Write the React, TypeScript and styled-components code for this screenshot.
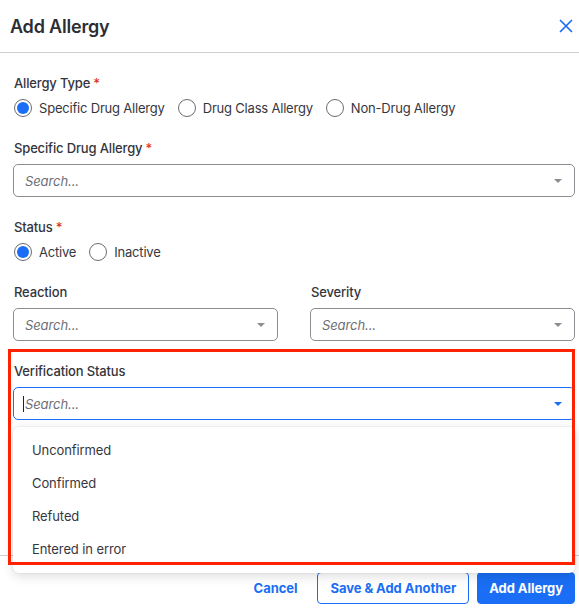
import React from 'react';
import styled, { createGlobalStyle } from 'styled-components';

const GlobalStyle = createGlobalStyle`
  html, body {
    margin: 0;
    padding: 0;
    background: #ffffff;
  }
  body {
    font-family: Inter, "Noto Sans", "Liberation Sans", sans-serif;
    color: #34353c;
    -webkit-font-smoothing: antialiased;
  }
`;

const Modal = styled.div`
  position: relative;
  width: 579px;
  height: 613px;
  background: #fff;
  overflow: hidden;
`;

const Header = styled.div`
  height: 52px;
  display: flex;
  align-items: center;
  justify-content: space-between;
  padding: 0 5px 0 10px;
  border-bottom: 1px solid #cfcfd3;
`;

const Title = styled.h2`
  margin: 0;
  font-size: 18px;
  font-weight: 600;
  color: #2c2d33;
  letter-spacing: -0.2px;
`;

const CloseButton = styled.button`
  border: 0;
  background: none;
  padding: 0;
  width: 16px;
  height: 16px;
  display: flex;
  align-items: center;
  justify-content: center;
  color: #1a6ef5;
  cursor: pointer;
`;

const Body = styled.div`
  padding: 20px 4px 0 13px;
  display: flex;
  flex-direction: column;
  gap: 20px;
`;

const Field = styled.div<{ $tight?: boolean }>`
  position: relative;
  display: flex;
  flex-direction: column;
  gap: ${p => (p.$tight ? '5px' : '6px')};
  min-width: 0;
`;

const Row = styled.div`
  display: grid;
  grid-template-columns: 1fr 1fr;
  gap: 32px;
`;

const Label = styled.div`
  font-size: 13px;
  line-height: 20px;
  font-weight: 450;
  color: #34353c;
  padding-left: 1px;
  letter-spacing: -0.15px;
`;

const Required = styled.span`
  color: #e0322c;
  margin-left: 3px;
`;

const RadioGroup = styled.div`
  display: flex;
  align-items: center;
  gap: 13px;
  height: 20px;
  padding-left: 1px;
`;

const RadioOption = styled.label`
  display: flex;
  align-items: center;
  gap: 7px;
  font-size: 13px;
  color: #36373e;
  letter-spacing: -0.2px;
`;

const RadioCircle = styled.span<{ $checked?: boolean }>`
  width: 18px;
  height: 18px;
  box-sizing: border-box;
  border-radius: 50%;
  border: 1px solid #6b6c72;
  display: flex;
  align-items: center;
  justify-content: center;
  background: #fff;

  &::after {
    content: '';
    width: 12px;
    height: 12px;
    border-radius: 50%;
    background: ${p => (p.$checked ? '#1a6ef5' : 'transparent')};
  }
`;

const SelectBox = styled.div<{ $focused?: boolean }>`
  height: 33px;
  box-sizing: border-box;
  border: 1px solid ${p => (p.$focused ? '#1a6ef5' : '#8c8d93')};
  border-radius: 5px;
  display: flex;
  align-items: center;
  justify-content: space-between;
  padding: 0 12px 0 11px;
  background: #fff;
`;

const Placeholder = styled.span<{ $focused?: boolean }>`
  font-size: 13px;
  font-style: italic;
  color: #6d6e75;
  letter-spacing: -0.1px;
  ${p => (p.$focused ? 'border-left: 1px solid #222; padding-left: 1px; margin-left: -2px;' : '')}
`;

const Caret = styled.span<{ $focused?: boolean }>`
  width: 0;
  height: 0;
  border-left: 4px solid transparent;
  border-right: 4px solid transparent;
  border-top: 4px solid ${p => (p.$focused ? '#1a6ef5' : '#8c8d93')};
`;

const TextArea = styled.div`
  height: 67px;
  box-sizing: border-box;
  border: 1px solid #8c8d93;
  border-radius: 5px;
`;

const Menu = styled.ul`
  position: absolute;
  top: 66px;
  left: 0;
  right: 0;
  margin: 0;
  padding: 6px 0 8px;
  list-style: none;
  background: #fff;
  border-radius: 6px;
  box-shadow: 0 3px 12px rgba(0, 0, 0, 0.14), 0 0 0 1px rgba(0, 0, 0, 0.03);
  z-index: 5;
`;

const MenuItem = styled.li`
  height: 33px;
  display: flex;
  align-items: center;
  padding-left: 19px;
  font-size: 13px;
  color: #36373e;
  letter-spacing: -0.1px;
`;

const Footer = styled.div`
  margin-top: 22px;
  border-top: 1px solid #cfcfd3;
  padding: 16px 4px 0 0;
  display: flex;
  justify-content: flex-end;
  gap: 8px;
`;

const Button = styled.button<{ $variant: 'text' | 'outline' | 'solid' }>`
  height: 32px;
  box-sizing: border-box;
  padding: 0 ${p => (p.$variant === 'outline' ? '12px' : '11px')};
  border-radius: 4px;
  font-family: inherit;
  font-size: 13px;
  font-weight: 700;
  letter-spacing: -0.05px;
  cursor: pointer;
  border: 1px solid ${p => (p.$variant === 'text' ? 'transparent' : '#1a6ef5')};
  background: ${p => (p.$variant === 'solid' ? '#1a6ef5' : '#fff')};
  color: ${p => (p.$variant === 'solid' ? '#fff' : '#1a6ef5')};
`;

const Highlight = styled.div`
  position: absolute;
  left: 8px;
  top: 349px;
  width: 567px;
  height: 216px;
  box-sizing: border-box;
  border: 3px solid #ff2200;
  pointer-events: none;
  z-index: 10;
`;

function Radio({ label, checked }: { label: string; checked?: boolean }) {
  return (
    <RadioOption>
      <RadioCircle $checked={checked} />
      {label}
    </RadioOption>
  );
}

function Select({ focused }: { focused?: boolean }) {
  return (
    <SelectBox $focused={focused}>
      <Placeholder $focused={focused}>Search...</Placeholder>
      <Caret $focused={focused} />
    </SelectBox>
  );
}

export default function App() {
  const options = ['Unconfirmed', 'Confirmed', 'Refuted', 'Entered in error'];

  return (
    <>
      <GlobalStyle />
      <Modal>
        <Header>
          <Title>Add Allergy</Title>
          <CloseButton aria-label="Close">
            <svg width="14" height="14" viewBox="0 0 14 14" fill="none">
              <path d="M1.5 1.5l11 11M12.5 1.5l-11 11" stroke="currentColor" strokeWidth="1.7" strokeLinecap="round" />
            </svg>
          </CloseButton>
        </Header>
        <Body>
          <Field $tight>
            <Label>
              Allergy Type<Required>*</Required>
            </Label>
            <RadioGroup>
              <Radio label="Specific Drug Allergy" checked />
              <Radio label="Drug Class Allergy" />
              <Radio label="Non-Drug Allergy" />
            </RadioGroup>
          </Field>
          <Field>
            <Label>
              Specific Drug Allergy<Required>*</Required>
            </Label>
            <Select />
          </Field>
          <Field $tight>
            <Label>
              Status<Required>*</Required>
            </Label>
            <RadioGroup>
              <Radio label="Active" checked />
              <Radio label="Inactive" />
            </RadioGroup>
          </Field>
          <Row>
            <Field>
              <Label>Reaction</Label>
              <Select />
            </Field>
            <Field>
              <Label>Severity</Label>
              <Select />
            </Field>
          </Row>
          <Field>
            <Label>Verification Status</Label>
            <Select focused />
            <Menu>
              {options.map(o => (
                <MenuItem key={o}>{o}</MenuItem>
              ))}
            </Menu>
          </Field>
          <Field>
            <Label>&nbsp;</Label>
            <TextArea />
          </Field>
        </Body>
        <Footer>
          <Button $variant="text">Cancel</Button>
          <Button $variant="outline">Save &amp; Add Another</Button>
          <Button $variant="solid">Add Allergy</Button>
        </Footer>
        <Highlight />
      </Modal>
    </>
  );
}
